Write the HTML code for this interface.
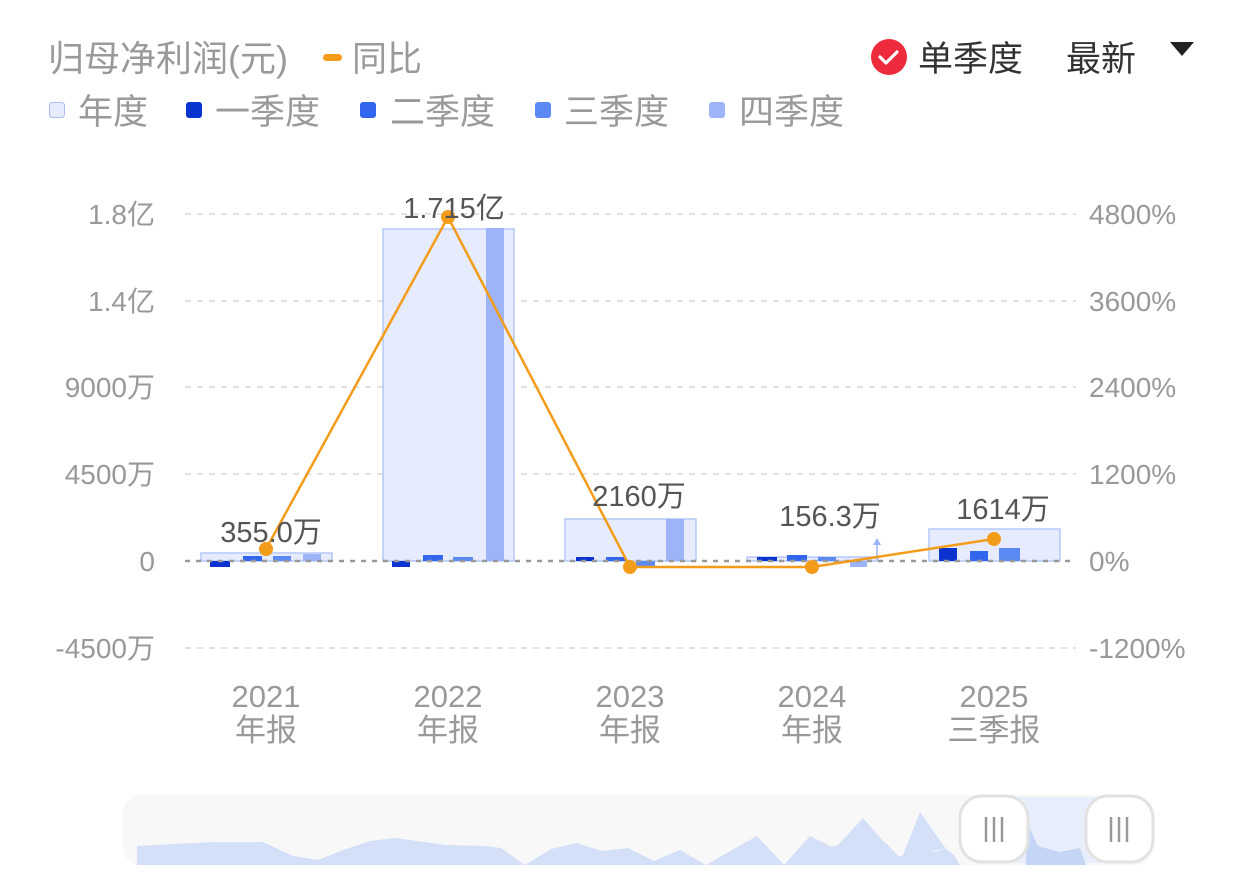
<!DOCTYPE html>
<html><head><meta charset="utf-8"><style>
html,body{margin:0;padding:0;background:#fff;width:1242px;height:896px;overflow:hidden}
svg{display:block}
text{font-family:"Liberation Sans","Noto Sans CJK SC",sans-serif}
</style></head><body>
<svg width="1242" height="896" viewBox="0 0 1242 896" xmlns="http://www.w3.org/2000/svg">
<text x="48" y="71" font-size="36" fill="#9a9a9a">归母净利润(元)</text>
<rect x="323" y="54" width="19" height="7" rx="3.5" fill="#f39c1a"/>
<text x="352" y="71" font-size="35" fill="#9a9a9a">同比</text>
<circle cx="889" cy="57" r="18" fill="#ee2b3c"/>
<path d="M880 57 l6 6 l11 -11" stroke="#fff" stroke-width="3.2" fill="none" stroke-linecap="round" stroke-linejoin="round"/>
<text x="918" y="71" font-size="35" fill="#333">单季度</text>
<text x="1066" y="71" font-size="35" fill="#333">最新</text>
<path d="M1170 42 h24 l-12 14 z" fill="#222"/>
<rect x="49.5" y="102.5" width="15" height="15" rx="3" fill="#e6ecfd" stroke="#a9bdf0"/>
<text x="78" y="124" font-size="35" fill="#9a9a9a">年度</text>
<rect x="186" y="102" width="16" height="16" rx="3" fill="#0a33d0"/>
<text x="215" y="124" font-size="35" fill="#9a9a9a">一季度</text>
<rect x="360" y="102" width="16" height="16" rx="3" fill="#3366ee"/>
<text x="390" y="124" font-size="35" fill="#9a9a9a">二季度</text>
<rect x="535" y="102" width="16" height="16" rx="3" fill="#5b8af5"/>
<text x="564" y="124" font-size="35" fill="#9a9a9a">三季度</text>
<rect x="709" y="102" width="16" height="16" rx="3" fill="#9db5f8"/>
<text x="739" y="124" font-size="35" fill="#9a9a9a">四季度</text>
<g stroke="#e2e2e2" stroke-width="2" stroke-dasharray="6 6">
<line x1="185" y1="214" x2="1076" y2="214"/>
<line x1="185" y1="301" x2="1076" y2="301"/>
<line x1="185" y1="387" x2="1076" y2="387"/>
<line x1="185" y1="474" x2="1076" y2="474"/>
<line x1="185" y1="648" x2="1076" y2="648"/>
</g>
<g font-size="28" fill="#999" text-anchor="end">
<text x="155" y="224">1.8亿</text>
<text x="155" y="311">1.4亿</text>
<text x="155" y="397">9000万</text>
<text x="155" y="484">4500万</text>
<text x="155" y="571">0</text>
<text x="155" y="658">-4500万</text>
</g>
<g font-size="28" fill="#999">
<text x="1089" y="224">4800%</text>
<text x="1089" y="311">3600%</text>
<text x="1089" y="397">2400%</text>
<text x="1089" y="484">1200%</text>
<text x="1089" y="571">0%</text>
<text x="1089" y="658">-1200%</text>
</g>
<g fill="#e6ecfd" stroke="#b5c8f8" stroke-width="1.5">
<rect x="201" y="553" width="131" height="8"/>
<rect x="383" y="229" width="131" height="332"/>
<rect x="565" y="519" width="131" height="42"/>
<rect x="747" y="557" width="131" height="4"/>
<rect x="929" y="529" width="131" height="32"/>
</g>
<g>
<rect x="210" y="561" width="20" height="6" fill="#0a33d0"/>
<rect x="243" y="556" width="19" height="5" fill="#3366ee"/>
<rect x="273" y="556" width="18" height="5" fill="#5b8af5"/>
<rect x="303" y="554" width="18" height="7" fill="#9db5f8"/>
<rect x="392" y="561" width="18" height="6" fill="#0a33d0"/>
<rect x="423" y="555" width="20" height="6" fill="#3366ee"/>
<rect x="453" y="557" width="20" height="4" fill="#5b8af5"/>
<rect x="486" y="228" width="18" height="333" fill="#9db5f8"/>
<rect x="576" y="557" width="18" height="4" fill="#0a33d0"/>
<rect x="606" y="557" width="20" height="4" fill="#3366ee"/>
<rect x="636" y="561" width="19" height="5" fill="#5b8af5"/>
<rect x="666" y="519" width="18" height="42" fill="#9db5f8"/>
<rect x="757" y="557" width="20" height="4" fill="#0a33d0"/>
<rect x="787" y="555" width="20" height="6" fill="#3366ee"/>
<rect x="818" y="557" width="18" height="4" fill="#5b8af5"/>
<rect x="850" y="561" width="17" height="6" fill="#9db5f8"/>
<rect x="939" y="548" width="18" height="13" fill="#0a33d0"/>
<rect x="970" y="551" width="18" height="10" fill="#3366ee"/>
<rect x="999" y="548" width="21" height="13" fill="#5b8af5"/>
</g>
<line x1="877" y1="560" x2="877" y2="542" stroke="#9db5f8" stroke-width="1.5"/>
<path d="M873 545 l4 -7 l4 7 z" fill="#9db5f8"/>
<line x1="185" y1="561" x2="1076" y2="561" stroke="#999" stroke-width="2.5" stroke-dasharray="5 6"/>
<polyline points="266,549 448,217 630,567 812,567 994,539" fill="none" stroke="#f39c1a" stroke-width="2.5"/>
<g fill="#f39c1a">
<circle cx="266" cy="549" r="7"/><circle cx="448" cy="217" r="7"/><circle cx="630" cy="567" r="7"/><circle cx="812" cy="567" r="7"/><circle cx="994" cy="539" r="7"/>
</g>
<g font-size="29" fill="#555" text-anchor="middle">
<text x="271" y="542">355.0万</text>
<text x="454" y="218">1.715亿</text>
<text x="639" y="506">2160万</text>
<text x="830" y="526">156.3万</text>
<text x="1003" y="519">1614万</text>
</g>
<g font-size="31" fill="#999" text-anchor="middle">
<text x="266" y="707">2021</text><text x="266" y="741">年报</text>
<text x="448" y="707">2022</text><text x="448" y="741">年报</text>
<text x="630" y="707">2023</text><text x="630" y="741">年报</text>
<text x="812" y="707">2024</text><text x="812" y="741">年报</text>
<text x="994" y="707">2025</text><text x="994" y="741">三季报</text>
</g>
<rect x="123" y="795" width="1030" height="70" rx="18" fill="#f8f8f8"/>
<rect x="994" y="797" width="130" height="66" fill="#e8eefc"/>
<path d="M137 846 L213 842 L263 842 L293 856 L318 860 L343 850 L370 841 L395 838 L446 845 L485 846 L501 848 L525 865 L551 849 L576 843 L602 851 L628 848 L654 861 L680 850 L706 865 L732 850 L757 836 L784 865 L810 836 L832 847 L838 845 L863 818 L884 842 L886 843 L899 857 L903 855 L912 844 L934 852 L946 849 L954 855 L960 865 L137 865 Z" fill="#d4e0f8"/>
<path d="M1026 820 L1038 846 L1060 852 L1080 848 L1086 865 L1026 865 Z" fill="#c5d5f6"/>
<path d="M903 855 L920 812 L946 849 Z" fill="#d4e0f8"/>
<rect x="960" y="796" width="68" height="66" rx="22" fill="#fff" stroke="#e2e2e2" stroke-width="3"/>
<rect x="1086" y="796" width="67" height="66" rx="22" fill="#fff" stroke="#e2e2e2" stroke-width="3"/>
<g stroke="#999" stroke-width="2.5">
<line x1="986" y1="817" x2="986" y2="842"/><line x1="994" y1="817" x2="994" y2="842"/><line x1="1002" y1="817" x2="1002" y2="842"/>
<line x1="1111" y1="817" x2="1111" y2="842"/><line x1="1119" y1="817" x2="1119" y2="842"/><line x1="1127" y1="817" x2="1127" y2="842"/>
</g>
</svg>
</body></html>
